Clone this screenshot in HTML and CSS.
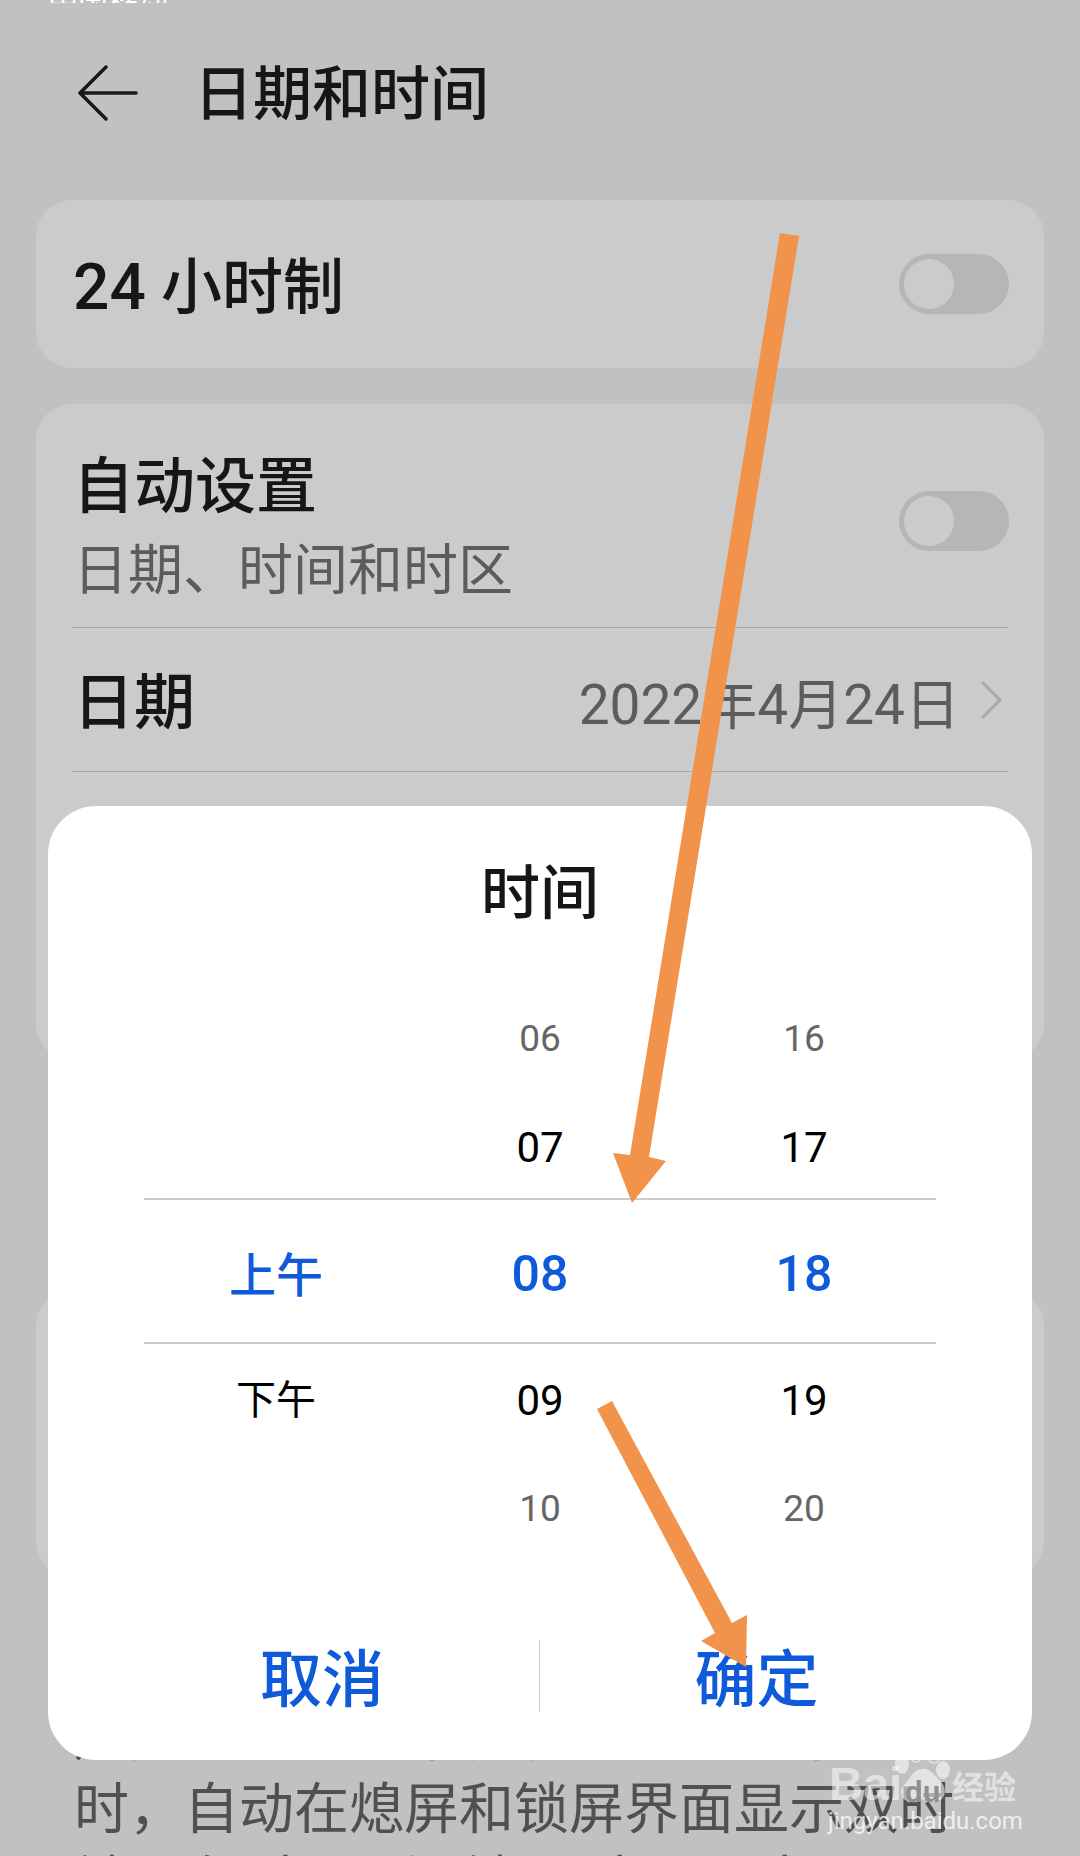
FILE: index.html
```html
<!DOCTYPE html>
<html lang="zh-CN">
<head>
    <meta charset="UTF-8">
    <meta name="viewport" content="width=device-width, initial-scale=1.0">
    <title>日期和时间</title>
    <link rel="stylesheet" href="styles.css">
</head>
<body>
    <div class="status-bar"><span>中国移动</span></div>

    <header class="top-bar">
        <svg class="back-icon" width="60" height="56" viewBox="0 0 60 56">
            <path d="M28 2 L2 28 L28 54 M2 28 H58" fill="none" stroke="#1a1a1a" stroke-width="3.5" stroke-linecap="round" stroke-linejoin="round"/>
        </svg>
        <h1 class="page-title">日期和时间</h1>
    </header>

    <section class="card card-single">
        <div class="row-label"><span class="num">24</span> 小时制</div>
        <div class="toggle"><div class="toggle-knob"></div></div>
    </section>

    <section class="card card-main">
        <div class="row row-auto">
            <div>
                <div class="row-label auto-title">自动设置</div>
                <div class="row-sub">日期、时间和时区</div>
            </div>
            <div class="toggle toggle-auto"><div class="toggle-knob"></div></div>
        </div>
        <div class="row row-date">
            <div class="row-label">日期</div>
            <div class="row-value">
                <span>2022年4月24日</span>
                <svg class="chevron" width="22" height="40" viewBox="0 0 22 40">
                    <path d="M2 2 L20 20 L2 38" fill="none" stroke="#a8a8a8" stroke-width="3"/>
                </svg>
            </div>
        </div>
    </section>

    <section class="card card-dual"></section>

    <p class="note">
        开启后，在您离开常驻地区并且当前<br>
        用户所在地与常驻城市的时区不同<br>
        时，自动在熄屏和锁屏界面显示双时<br>
        钟。在“桌面”和“锁屏”中设置本
    </p>

    <div class="dialog">
        <div class="dialog-title">时间</div>

        <div class="picker">
            <div class="cell"></div>
            <div class="cell far">06</div>
            <div class="cell far">16</div>

            <div class="cell"></div>
            <div class="cell near">07</div>
            <div class="cell near">17</div>

            <div class="cell selected cn">上午</div>
            <div class="cell selected">08</div>
            <div class="cell selected">18</div>

            <div class="cell near cn">下午</div>
            <div class="cell near">09</div>
            <div class="cell near">19</div>

            <div class="cell"></div>
            <div class="cell far">10</div>
            <div class="cell far">20</div>
        </div>

        <div class="dialog-actions">
            <div class="action">取消</div>
            <div class="action action-ok">确定</div>
        </div>
    </div>

    <!-- baidu watermark -->
    <div class="watermark">
        <svg class="paw" width="64" height="66" viewBox="0 0 64 66">
            <g fill="none" stroke="#fff" stroke-opacity="0.55" stroke-width="1.5">
                <ellipse cx="22" cy="11" rx="7" ry="10"/>
                <ellipse cx="40" cy="12" rx="7" ry="10"/>
            </g>
            <g fill="#fff" fill-opacity="0.55">
                <ellipse cx="8" cy="23" rx="7" ry="10"/>
                <ellipse cx="49" cy="29" rx="7" ry="9"/>
                <path d="M28 28 C36 26 42 36 48 42 C54 50 50 62 40 60 C32 58 26 58 18 60 C8 62 4 52 10 44 C16 38 20 28 28 28 Z"/>
            </g>
        </svg>
        <span class="wm-bai">Bai</span>
        <span class="wm-du">du</span>
        <span class="wm-jy">经验</span>
        <span class="wm-url">jingyan.baidu.com</span>
    </div>

    <svg class="arrows" width="1080" height="1856" viewBox="0 0 1080 1856">
        <polygon fill="#f2934b" points="780,233 799,236 649,1157 666,1161 632,1203 613,1153 630,1155"/>
        <polygon fill="#f2934b" points="597,1409 612,1401 732,1623 747,1615 746,1667 701,1641 715,1633"/>
    </svg>
</body>
</html>
```

FILE: styles.css
```css
* {
    margin: 0;
    padding: 0;
    box-sizing: border-box;
}

html, body {
    width: 1080px;
    height: 1856px;
    overflow: hidden;
}

body {
    position: relative;
    background: #c0c1c3;
    color: #161616;
    font-family: Roboto, "Noto Sans CJK SC", sans-serif;
}

.status-bar {
    height: 3px;
    padding-left: 48px;
    color: #fff;
    font-size: 30px;
    line-height: 3px;
    overflow: hidden;
    display: flex;
    align-items: flex-end;
}

.status-bar span {
    margin-top: -26px;
}

.top-bar {
    height: 178px;
    margin-bottom: 19px;
    padding-left: 78px;
    display: flex;
    align-items: center;
    gap: 56px;
}

.back-icon {
    margin-top: 2px;
}

.page-title {
    padding-top: 6px;
    font-size: 59px;
    font-weight: 500;
    line-height: 80px;
}

.card {
    margin: 0 36px;
    background: #cbcbcb;
    border-radius: 36px;
}

.card-single {
    height: 168px;
    padding: 0 35px 0 37px;
    display: flex;
    justify-content: space-between;
    align-items: center;
    margin-bottom: 36px;
}

.card-main {
    height: 656px;
    padding: 0 36px;
    margin-bottom: 230px;
}

.card-dual {
    height: 287px;
}

.row {
    display: flex;
    justify-content: space-between;
    border-bottom: 1px solid #a9a9a9;
}

.row-auto {
    height: 224px;
    padding-top: 43px;
    align-items: flex-start;
}

.row-date {
    height: 144px;
    align-items: center;
}

.row-label {
    font-size: 61px;
    font-weight: 500;
    line-height: 80px;
}

.card-single .row-label {
    padding-top: 8px;
}

.num {
    font-size: 64px;
}

.auto-title {
    padding-left: 1px;
}

.row-sub {
    padding-left: 1px;
    color: #5c5c5c;
    font-size: 55px;
    line-height: 86px;
}

.row-date .row-label {
    padding: 6px 0 0 1px;
}

.row-value {
    display: flex;
    align-items: center;
    gap: 20px;
    padding-right: 6px;
    color: #5c5c5c;
    font-size: 55px;
}

.toggle {
    width: 110px;
    height: 60px;
    padding: 5px;
    background: #b6b6b6;
    border-radius: 30px;
}

.toggle-auto {
    margin: 44px -1px 0 0;
}

.toggle-knob {
    width: 50px;
    height: 50px;
    background: #cbcbcb;
    border-radius: 50%;
}

.note {
    margin-top: 50px;
    padding-left: 74px;
    color: #505050;
    font-size: 55px;
    line-height: 73px;
    white-space: nowrap;
}

/* time dialog over the settings list */
.dialog {
    position: absolute;
    top: 806px;
    left: 48px;
    width: 984px;
    height: 954px;
    background: #fff;
    border-radius: 48px;
}

.dialog-title {
    height: 164px;
    margin-bottom: 10px;
    display: flex;
    align-items: center;
    justify-content: center;
    font-size: 59px;
    font-weight: 500;
}

.picker {
    width: 792px;
    margin: 0 auto;
    display: grid;
    grid-template-columns: repeat(3, 1fr);
    grid-template-rows: 116px 102px 146px 112px 104px;
}

.cell {
    display: flex;
    align-items: center;
    justify-content: center;
}

.far {
    color: #666;
    font-size: 37px;
}

.near {
    color: #000;
    font-size: 42px;
}

.near.cn {
    font-size: 40px;
    padding-bottom: 6px;
}

.selected {
    color: #0f5ad9;
    font-size: 50px;
    font-weight: 500;
    padding-top: 6px;
    border-top: 2px solid #cccccc;
    border-bottom: 2px solid #cccccc;
}

.selected.cn {
    font-size: 47px;
    padding-top: 0;
}

.dialog-actions {
    margin-top: 80px;
    height: 72px;
    padding: 0 59px 0 57px;
    display: grid;
    grid-template-columns: 1fr 1fr;
}

.action {
    display: flex;
    align-items: center;
    justify-content: center;
    padding-top: 10px;
    color: #0f5ad9;
    font-size: 62px;
    font-weight: 500;
    line-height: 62px;
}

.action-ok {
    border-left: 1px solid #cccccc;
}

.watermark {
    position: absolute;
    top: 1740px;
    left: 820px;
    width: 220px;
    height: 100px;
    color: rgba(255, 255, 255, 0.55);
}

.watermark span {
    position: absolute;
    white-space: nowrap;
}

.paw {
    position: absolute;
    top: 1px;
    left: 74px;
}

.wm-bai {
    top: 16px;
    left: 9px;
    font-family: "Liberation Sans", sans-serif;
    font-size: 47px;
    font-weight: 700;
}

.wm-du {
    top: 36px;
    left: 85px;
    color: #8f8f8f;
    font-family: "Liberation Sans", sans-serif;
    font-size: 29px;
    font-weight: 700;
}

.wm-jy {
    top: 22px;
    left: 132px;
    font-family: "Noto Sans CJK SC", sans-serif;
    font-size: 32px;
    font-weight: 700;
}

.wm-url {
    top: 67px;
    left: 8px;
    color: rgba(255, 255, 255, 0.75);
    font-size: 24px;
}

.arrows {
    position: absolute;
    top: 0;
    left: 0;
}
```
